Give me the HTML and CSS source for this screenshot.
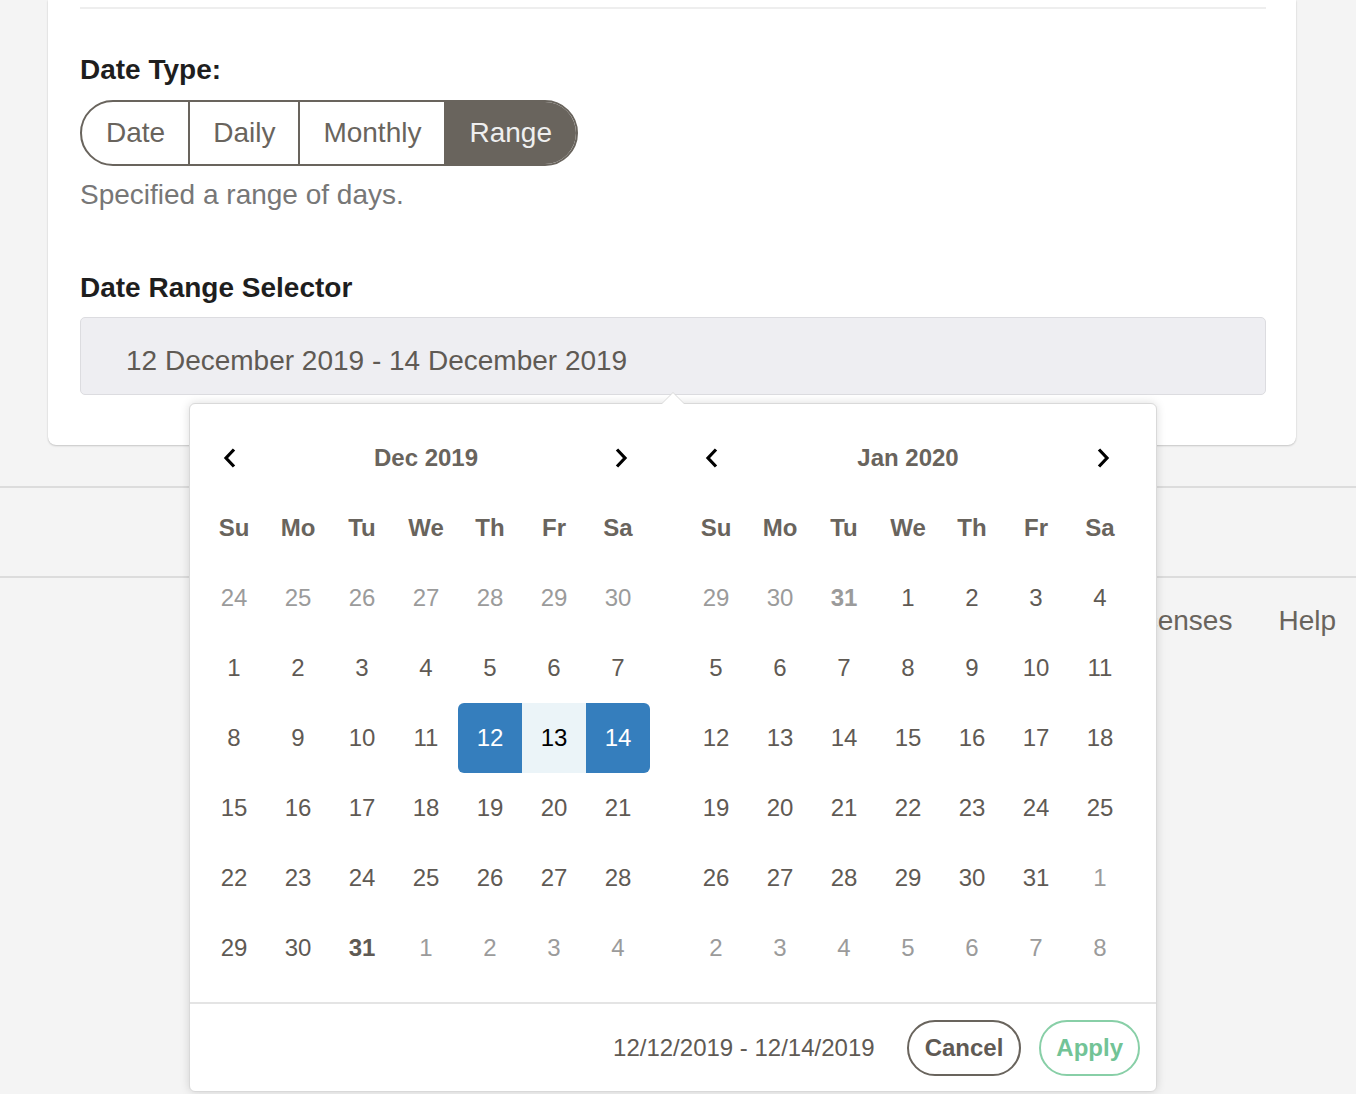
FILE: index.html
```html
<!DOCTYPE html>
<html lang="en">
<head>
<meta charset="utf-8">
<title>Date Range Selector</title>
<link rel="stylesheet" href="styles.css">
</head>
<body>
<div class="page">
  <section class="card">
    <div class="card-top"></div>
    <div class="field">
      <div class="label">Date Type:</div>
      <div class="seg">
        <span class="seg-btn">Date</span>
        <span class="seg-btn">Daily</span>
        <span class="seg-btn">Monthly</span>
        <span class="seg-btn active">Range</span>
      </div>
      <div class="hint">Specified a range of days.</div>
    </div>
    <div class="field field-range">
      <div class="label">Date Range Selector</div>
      <div class="range-input">12 December 2019 - 14 December 2019</div>
    </div>
  </section>
  <div class="band"></div>
  <nav class="links">
    <a class="link">Licenses</a>
    <a class="link">Help</a>
  </nav>
</div>

<div class="picker">
  <div class="calendars">
    <div class="cal">
      <div class="nav prev"><svg width="14" height="22" viewBox="0 0 14 22"><polyline points="11,2.5 3,11 11,19.5" fill="none" stroke="#000" stroke-width="3.2"/></svg></div>
      <div class="month">Dec 2019</div>
      <div class="nav next"><svg width="14" height="22" viewBox="0 0 14 22"><polyline points="3,2.5 11,11 3,19.5" fill="none" stroke="#000" stroke-width="3.2"/></svg></div>
      <div class="wd">Su</div><div class="wd">Mo</div><div class="wd">Tu</div><div class="wd">We</div><div class="wd">Th</div><div class="wd">Fr</div><div class="wd">Sa</div>
      <div class="d off">24</div><div class="d off">25</div><div class="d off">26</div><div class="d off">27</div><div class="d off">28</div><div class="d off">29</div><div class="d off">30</div>
      <div class="d">1</div><div class="d">2</div><div class="d">3</div><div class="d">4</div><div class="d">5</div><div class="d">6</div><div class="d">7</div>
      <div class="d">8</div><div class="d">9</div><div class="d">10</div><div class="d">11</div><div class="d start">12</div><div class="d in">13</div><div class="d end">14</div>
      <div class="d">15</div><div class="d">16</div><div class="d">17</div><div class="d">18</div><div class="d">19</div><div class="d">20</div><div class="d">21</div>
      <div class="d">22</div><div class="d">23</div><div class="d">24</div><div class="d">25</div><div class="d">26</div><div class="d">27</div><div class="d">28</div>
      <div class="d">29</div><div class="d">30</div><div class="d today">31</div><div class="d off">1</div><div class="d off">2</div><div class="d off">3</div><div class="d off">4</div>
    </div>
    <div class="cal">
      <div class="nav prev"><svg width="14" height="22" viewBox="0 0 14 22"><polyline points="11,2.5 3,11 11,19.5" fill="none" stroke="#000" stroke-width="3.2"/></svg></div>
      <div class="month">Jan 2020</div>
      <div class="nav next"><svg width="14" height="22" viewBox="0 0 14 22"><polyline points="3,2.5 11,11 3,19.5" fill="none" stroke="#000" stroke-width="3.2"/></svg></div>
      <div class="wd">Su</div><div class="wd">Mo</div><div class="wd">Tu</div><div class="wd">We</div><div class="wd">Th</div><div class="wd">Fr</div><div class="wd">Sa</div>
      <div class="d off">29</div><div class="d off">30</div><div class="d off today">31</div><div class="d">1</div><div class="d">2</div><div class="d">3</div><div class="d">4</div>
      <div class="d">5</div><div class="d">6</div><div class="d">7</div><div class="d">8</div><div class="d">9</div><div class="d">10</div><div class="d">11</div>
      <div class="d">12</div><div class="d">13</div><div class="d">14</div><div class="d">15</div><div class="d">16</div><div class="d">17</div><div class="d">18</div>
      <div class="d">19</div><div class="d">20</div><div class="d">21</div><div class="d">22</div><div class="d">23</div><div class="d">24</div><div class="d">25</div>
      <div class="d">26</div><div class="d">27</div><div class="d">28</div><div class="d">29</div><div class="d">30</div><div class="d">31</div><div class="d off">1</div>
      <div class="d off">2</div><div class="d off">3</div><div class="d off">4</div><div class="d off">5</div><div class="d off">6</div><div class="d off">7</div><div class="d off">8</div>
    </div>
  </div>
  <div class="picker-foot">
    <span class="selected">12/12/2019 - 12/14/2019</span>
    <span class="btn btn-cancel">Cancel</span>
    <span class="btn btn-apply">Apply</span>
  </div>
</div>
</body>
</html>
```

FILE: styles.css
```css
html, body {
  margin: 0;
  padding: 0;
}
body {
  background: #f4f4f4;
  font-family: "Liberation Sans", Arial, sans-serif;
  color: #5f5a54;
  position: relative;
  min-height: 1094px;
  overflow: hidden;
}

.page {
  display: flex;
  flex-direction: column;
}

.card {
  margin: 0 60px 0 48px;
  background: #fff;
  border-radius: 0 0 8px 8px;
  box-shadow: 0 1px 2px rgba(0, 0, 0, 0.18), 0 0 1px rgba(0, 0, 0, 0.12);
  padding: 0 30px 50px 32px;
}
.card-top {
  height: 7px;
  border-bottom: 2px solid #eeeeee;
}

.field {
  display: flex;
  flex-direction: column;
  align-items: flex-start;
}
.label {
  font-size: 28px;
  line-height: 32px;
  font-weight: bold;
  color: #1e1e1e;
  margin-top: 45px;
}
.field-range .label {
  margin-top: 61px;
}

.seg {
  display: flex;
  margin-top: 14px;
  border: 2px solid #69645d;
  border-radius: 33px;
  overflow: hidden;
}
.seg-btn {
  font-size: 28px;
  line-height: 62px;
  padding: 0 23px;
  color: #69645d;
  border-left: 2px solid #69645d;
}
.seg-btn:first-child {
  border-left: none;
  padding-left: 24px;
}
.seg-btn.active {
  background: #69645d;
  color: #efefef;
  padding-right: 24px;
}

.hint {
  font-size: 28px;
  line-height: 32px;
  color: #777;
  margin-top: 13px;
}

.range-input {
  align-self: stretch;
  margin-top: 13px;
  background: #eeeef2;
  border: 1px solid #dcdce0;
  border-radius: 5px;
  font-size: 28px;
  line-height: 32px;
  color: #5f5a54;
  padding: 27px 45px 17px;
}

.band {
  margin-top: 41px;
  height: 88px;
  border-top: 2px solid #dcdcdc;
  border-bottom: 2px solid #dcdcdc;
}

.links {
  display: flex;
  justify-content: flex-end;
  gap: 46px;
  padding: 27px 20px 0 0;
}
.link {
  font-size: 28px;
  line-height: 32px;
  color: #69645d;
}

/* picker overlay */
.picker {
  position: absolute;
  left: 189px;
  top: 403px;
  width: 966px;
  background: #fff;
  border: 1px solid #d9d9d9;
  border-radius: 6px;
  box-shadow: 0 0 10px rgba(0, 0, 0, 0.14);
}
.picker::before,
.picker::after {
  content: "";
  position: absolute;
  width: 0;
  height: 0;
  border-left: 12px solid transparent;
  border-right: 12px solid transparent;
}
.picker::before {
  left: 471px;
  top: -12px;
  border-bottom: 12px solid #d9d9d9;
}
.picker::after {
  left: 472px;
  top: -11px;
  border-left-width: 11px;
  border-right-width: 11px;
  border-bottom: 11px solid #fff;
}

.calendars {
  display: flex;
  gap: 34px;
  padding: 19px 24px 19px 12px;
}
.cal {
  display: grid;
  grid-template-columns: repeat(7, 64px);
  grid-auto-rows: 70px;
}
.nav {
  display: flex;
  align-items: center;
  justify-content: center;
}
.nav.prev {
  padding-right: 8px;
}
.nav.next {
  padding-left: 6px;
}
.nav svg {
  display: block;
}
.month {
  grid-column: span 5;
  text-align: center;
  font-size: 24px;
  line-height: 70px;
  font-weight: bold;
  color: #69645d;
}
.wd {
  text-align: center;
  font-size: 24px;
  line-height: 70px;
  font-weight: bold;
  color: #69645d;
}
.d {
  text-align: center;
  font-size: 24px;
  line-height: 70px;
  color: #5f5a54;
}
.d.off {
  color: #9b9b9b;
}
.d.today {
  font-weight: bold;
}
.d.start,
.d.end {
  background: #357ebd;
  color: #fff;
}
.d.start {
  border-radius: 6px 0 0 6px;
}
.d.end {
  border-radius: 0 6px 6px 0;
}
.d.in {
  background: #ebf4f8;
  color: #000;
}

.picker-foot {
  display: flex;
  justify-content: flex-end;
  align-items: center;
  border-top: 2px solid #e4e4e4;
  padding: 16px 16px 15px;
}
.selected {
  font-size: 24px;
  line-height: 28px;
  color: #5f5a54;
  margin-right: 32px;
}
.btn {
  font-size: 24px;
  line-height: 52px;
  font-weight: bold;
  border: 2px solid;
  border-radius: 28px;
  padding: 0 16px;
}
.btn-cancel {
  color: #5f5a54;
  border-color: #69645d;
}
.btn-apply {
  margin-left: 18px;
  color: #72c396;
  border-color: #88cfa7;
  padding: 0 15px;
}
```
